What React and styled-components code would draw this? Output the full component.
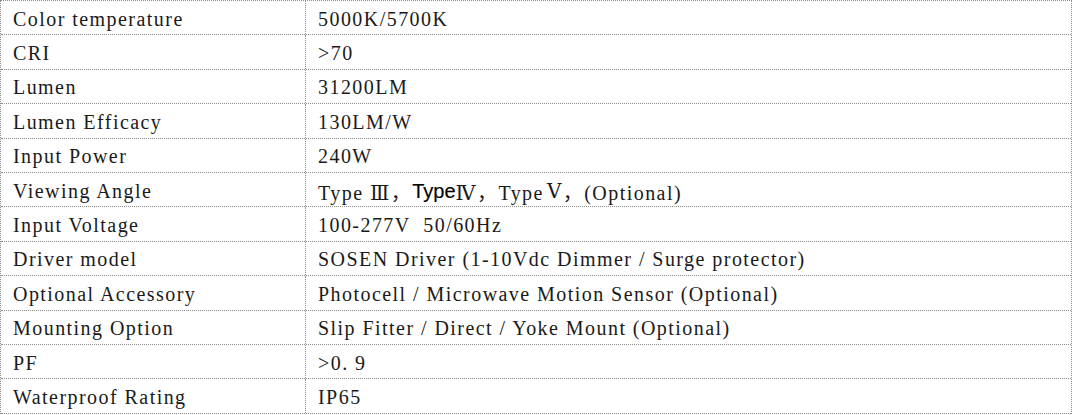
import React from "react";
import styled, { createGlobalStyle } from "styled-components";

const rows = [
  ["Color temperature", "5000K/5700K"],
  ["CRI", ">70"],
  ["Lumen", "31200LM"],
  ["Lumen Efficacy", "130LM/W"],
  ["Input Power", "240W"],
  ["Viewing Angle", "angle"],
  ["Input Voltage", "100-277V  50/60Hz"],
  ["Driver model", "SOSEN Driver (1-10Vdc Dimmer / Surge protector)"],
  ["Optional Accessory", "Photocell / Microwave Motion Sensor (Optional)"],
  ["Mounting Option", "Slip Fitter / Direct / Yoke Mount (Optional)"],
  ["PF", ">0. 9"],
  ["Waterproof Rating", "IP65"],
];

const App = () => {
  return (
    <>
      <GlobalStyle />
      <SpecTable>
        {rows.map(([label, value]) => (
          <Row key={label}>
            <Cell first>{label}</Cell>
            <Cell>
              {value === "angle" ? (
                <>
                  Type Ⅲ，<SansWord>Type</SansWord>Ⅳ，Type<Numeral>Ⅴ</Numeral>，(Optional)
                </>
              ) : (
                value
              )}
            </Cell>
          </Row>
        ))}
      </SpecTable>
    </>
  );
};

export default App;

const GlobalStyle = createGlobalStyle`
  body {
    margin: 0;
    background: #fff;
  }
`;

const SpecTable = styled.div`
  width: 1072px;
  border-top: 1px dotted #8a8a8a;
  border-left: 1px dotted #8a8a8a;
  border-right: 1px dotted #8a8a8a;
  box-sizing: border-box;
  font-family: "Liberation Serif", "DejaVu Serif", "Noto Sans CJK SC", serif;
  font-size: 20px;
  letter-spacing: 1.45px;
  color: #1a1a1a;
`;

const Row = styled.div`
  display: grid;
  grid-template-columns: 305px 1fr;
  height: 34.4px;
  box-sizing: border-box;
  border-bottom: 1px dotted #8a8a8a;
`;

const Cell = styled.div`
  display: flex;
  align-items: center;
  padding: 3px 0 0 12px;
  white-space: pre;
  border-right: ${(p) => (p.first ? "1px dotted #8a8a8a" : "none")};
`;

const SansWord = styled.span`
  font-family: "Liberation Sans", Arial, sans-serif;
  font-size: 20px;
  letter-spacing: 0;
  color: #000;
  -webkit-text-stroke: 0.15px #000;
`;

const Numeral = styled.span`
  padding-left: 3px;
`;
